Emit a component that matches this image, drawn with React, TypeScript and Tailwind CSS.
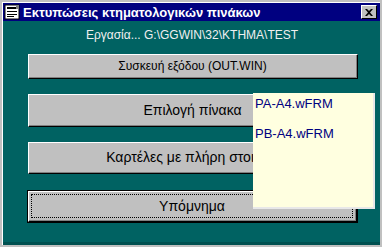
import React from 'react';

const font = { fontFamily: '"Liberation Sans", Arial, sans-serif' };

const Win95Button: React.FC<{ label: string; className: string; textClass: string; focused?: boolean }> = ({
  label,
  className,
  textClass,
  focused,
}) => {
  return (
    <div className={`${className} ${focused ? 'border border-black' : ''} box-border`}>
      <div className="h-full w-full border-t border-l border-white border-r border-b border-r-black border-b-black box-border">
        <div className="h-full w-full border-r border-b border-r-[#808080] border-b-[#808080] bg-[#c0c0c0] box-border p-[2px]">
          <div
            className={`h-full w-full flex items-center justify-center text-black ${textClass} ${
              focused ? 'border border-dotted border-black' : ''
            }`}
          >
            {label}
          </div>
        </div>
      </div>
    </div>
  );
};

const App: React.FC = () => {
  return (
    <div className="w-[382px] h-[247px] bg-[#c0c0c0] p-[2px] box-border relative overflow-hidden" style={font}>
      <div className="w-full h-full flex flex-col border-l border-t border-white">
        {/* Title bar */}
        <div className="h-[18px] bg-[#000080] flex items-center pl-[1px] pr-[3px] shrink-0">
          <svg width="16" height="16" viewBox="0 0 16 16" className="shrink-0">
            <rect x="1" y="1" width="14" height="14" fill="#ffffff" stroke="#000000" />
            <rect x="3" y="3" width="10" height="2" fill="#000000" />
            <rect x="3" y="7" width="10" height="1" fill="#000000" />
            <rect x="3" y="10" width="10" height="1" fill="#000000" />
            <rect x="3" y="12" width="7" height="1" fill="#000000" />
            <rect x="12" y="1" width="3" height="4" fill="#808080" />
          </svg>
          <span className="ml-[3px] text-white font-bold text-[13px] leading-none">
            Εκτυπώσεις κτηματολογικών πινάκων
          </span>
          <div className="ml-auto w-[16px] h-[14px] bg-[#c0c0c0] border-t border-l border-white border-r border-b border-r-black border-b-black flex items-center justify-center box-border">
            <svg width="8" height="7" viewBox="0 0 8 7">
              <path d="M0 0 L2 0 L4 2 L6 0 L8 0 L5 3.5 L8 7 L6 7 L4 5 L2 7 L0 7 L3 3.5 Z" fill="#000000" />
            </svg>
          </div>
        </div>

        {/* Body */}
        <div className="flex-1 bg-[#006262] flex flex-col pl-[25px] pr-[24px] border-b-[3px] border-[#005050]">
          <div className="h-[24px] mt-[2px] flex items-center justify-center text-[#f0f0f0] text-[12px]">
            Εργασία... G:\GGWIN\32\KTHMA\TEST
          </div>
          <Win95Button label="Συσκευή εξόδου (OUT.WIN)" className="h-[25px] mt-[7px] w-[330px]" textClass="text-[12px]" />
          <Win95Button label="Επιλογή πίνακα" className="h-[33px] mt-[15px] w-[330px]" textClass="text-[14px]" />
          <Win95Button label="Καρτέλες με πλήρη στοιχεία" className="h-[32px] mt-[15px] w-[330px]" textClass="text-[14px]" />
          <Win95Button label="Υπόμνημα" className="h-[33px] mt-[16px] w-[331px] -ml-[1px]" textClass="text-[14px]" focused />
        </div>
      </div>

      {/* Dropdown list */}
      <div className="absolute left-[253px] top-[93px] w-[122px] h-[116px] bg-[#ffffe0] border-r-2 border-b-2 border-[#e8e8e8] box-border flex flex-col pt-[2px] pl-[2px] text-[#000080] text-[13px]">
        <div className="h-[17px] leading-[17px]">PA-A4.wFRM</div>
        <div className="h-[17px] leading-[17px] mt-[13px]">PB-A4.wFRM</div>
      </div>
    </div>
  );
};

export default App;
